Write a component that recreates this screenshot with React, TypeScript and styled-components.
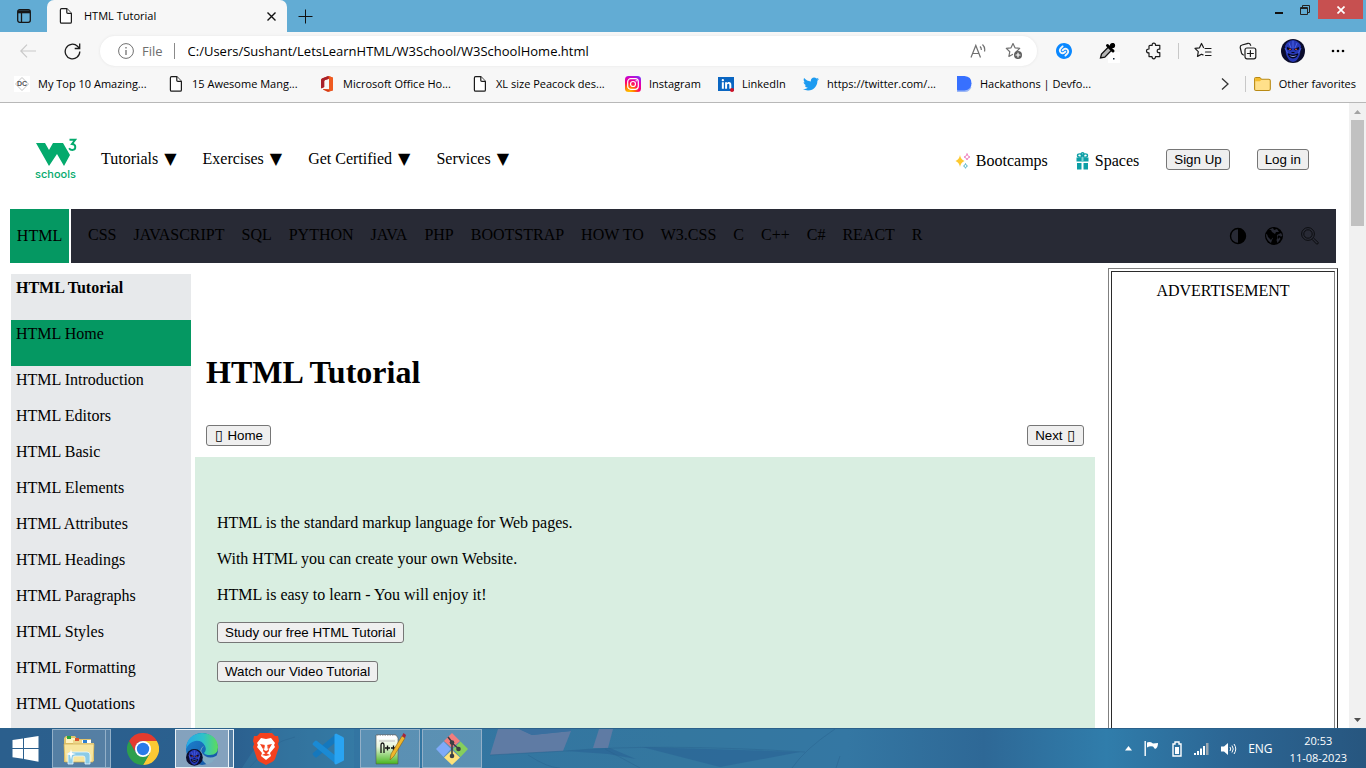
import React from 'react';
import styled, { createGlobalStyle } from 'styled-components';
import { FaTwitter, FaLinkedinIn } from 'react-icons/fa';
import { SiShazam } from 'react-icons/si';

const uiFont = `"Open Sans", "Noto Sans", sans-serif`;
const serif = `"Liberation Serif", "Times New Roman", serif`;
const green = '#059862';

const GlobalStyle = createGlobalStyle`
  * { box-sizing: border-box; }
  body { margin: 0; background: #fff; color: #000; font: 16px/18px ${serif}; }
  a { color: inherit; text-decoration: none; }
  svg { display: block; flex: none; }
  ul { list-style: none; margin: 0; padding: 0; }
`;

const Shell = styled.div`
  display: flex;
  flex-direction: column;
  height: 100vh;
  overflow: hidden;
`;

/* ---------- browser chrome ---------- */

const TitleBar = styled.header`
  display: flex;
  flex: none;
  height: 32px;
  background: #62acd4;
  font: 11px/16px ${uiFont};
`;
const IconButton = styled.button<{ $w?: number }>`
  display: flex;
  align-items: center;
  justify-content: center;
  flex: none;
  width: ${p => p.$w ?? 24}px;
  height: 24px;
  padding: 0;
  border: 0;
  background: none;
  color: #1b1b1b;
`;
const TabActions = styled(IconButton)`
  width: 47px;
  height: 32px;
`;
const Tab = styled.div`
  display: flex;
  align-items: center;
  width: 240px;
  padding: 0 4px 0 11px;
  border-radius: 7px 7px 0 0;
  background: #f7f7f7;
`;
const TabTitle = styled.span`
  flex: 1;
  margin-left: 10px;
`;
const NewTab = styled(IconButton)`
  width: 36px;
  height: 32px;
`;
const WindowButtons = styled.div`
  display: flex;
  margin-left: auto;
  margin-right: 3px;
`;
const WindowButton = styled.button<{ $close?: boolean }>`
  display: flex;
  align-items: center;
  justify-content: center;
  width: ${p => (p.$close ? 45 : 26)}px;
  height: 19px;
  padding: 0;
  border: 0;
  background: ${p => (p.$close ? '#c75050' : 'none')};
`;

const Toolbar = styled.div`
  display: flex;
  align-items: center;
  flex: none;
  height: 38px;
  padding: 0 16px;
  background: #f7f7f7;
`;
const HistoryActions = styled.div`
  display: flex;
  gap: 20px;
`;
const AddressBar = styled.form`
  display: flex;
  align-items: center;
  flex: 1;
  height: 30px;
  margin: 0 15px 0 16px;
  padding: 0 11px 0 18px;
  border-radius: 15px;
  background: #fff;
  box-shadow: 0 0 3px #e4e4e4;
  font: 13px/18px ${uiFont};
`;
const Scheme = styled.span`
  margin-left: 8px;
  padding-right: 11px;
  border-right: 1px solid #8a8a8a;
  color: #6e6e6e;
  line-height: 16px;
`;
const AddressInput = styled.input`
  flex: 1;
  min-width: 0;
  padding: 0 0 0 13px;
  border: 0;
  outline: 0;
  background: none;
  color: #000;
  font: inherit;
`;
const AddressActions = styled.div`
  display: flex;
  gap: 12px;
`;
const Separator = styled.span`
  width: 1px;
  height: 16px;
  background: #c8c8c8;
`;
const ToolbarActions = styled.div`
  display: flex;
  align-items: center;
  gap: 21px;
  ${Separator} { margin: 0 -9px; }
`;

const Bookmarks = styled.nav`
  display: flex;
  align-items: center;
  flex: none;
  height: 33px;
  padding: 0 10px 4px 14px;
  border-bottom: 1px solid #b8b8b8;
  background: #f7f7f7;
  font: 11px/16px ${uiFont};
`;
const Bookmark = styled.a<{ $w?: number }>`
  display: flex;
  align-items: center;
  gap: 8px;
  flex: none;
  width: ${p => (p.$w ? `${p.$w}px` : 'auto')};
  white-space: nowrap;
`;
const BookmarkEnd = styled.div`
  display: flex;
  align-items: center;
  gap: 8px;
  margin-left: auto;
`;

/* ---------- web page ---------- */

const Viewport = styled.div`
  display: flex;
  flex: 1;
  min-height: 0;
`;
const Page = styled.div`
  flex: 1;
  min-width: 0;
  overflow: hidden;
`;
const Scrollbar = styled.div`
  display: flex;
  flex-direction: column;
  align-items: center;
  justify-content: space-between;
  width: 17px;
  padding: 7px 0 6px;
  background: #f1f1f1;
`;
const Thumb = styled.div`
  width: 13px;
  height: 106px;
  margin: 6px 0 auto;
  background: #c1c1c1;
`;
const SiteHeader = styled.header`
  display: flex;
  align-items: center;
  height: 106px;
  padding: 6px 40px 0 35px;
`;
const SiteMenu = styled.nav`
  display: flex;
  gap: 26px;
  margin-left: 24px;
  a { display: flex; gap: 6px; }
`;
const Caret = styled.span`
  font-family: "DejaVu Sans", sans-serif;
`;
const SiteActions = styled.div`
  display: flex;
  align-items: center;
  gap: 27px;
  margin-left: auto;
`;
const IconLink = styled.a`
  display: flex;
  align-items: center;
  gap: 5px;
  padding-top: 4px;
`;
const PlainButton = styled.button`
  height: 21px;
  padding: 0 7px;
  border: 1px solid #767676;
  border-radius: 3px;
  background: #efefef;
  color: #000;
  font-family: "Liberation Sans", Arial, sans-serif;
`;
const Box = styled.span`
  padding: 0 1px;
  font: 14px/14px "DejaVu Sans", sans-serif;
`;

const TopicBar = styled.nav`
  display: flex;
  gap: 2px;
  height: 54px;
  margin: 0 13px 0 10px;
`;
const CurrentTopic = styled.a`
  display: flex;
  align-items: center;
  justify-content: center;
  width: 59px;
  background: ${green};
`;
const Topics = styled.div`
  display: flex;
  align-items: center;
  flex: 1;
  gap: 17px;
  padding: 0 17px;
  background: #282a35;
  a { padding-bottom: 2px; }
`;
const TopicIcons = styled.div`
  display: flex;
  align-items: center;
  gap: 18px;
  margin-left: auto;
`;

const Columns = styled.div`
  display: flex;
  align-items: flex-start;
  padding: 5px 11px 0;
`;
const Sidebar = styled.ul`
  flex: none;
  width: 180px;
  margin-top: 6px;
  padding-bottom: 36px;
  background: #e7e9eb;
`;
const SideItem = styled.li<{ $tall?: boolean; $active?: boolean; $bold?: boolean }>`
  height: ${p => (p.$tall ? 46 : 36)}px;
  padding: 5px;
  background: ${p => (p.$active ? green : 'transparent')};
  font-weight: ${p => (p.$bold ? 700 : 400)};
`;
const Main = styled.main`
  flex: 1;
  min-width: 0;
  margin: 0 13px 0 4px;
`;
const Title = styled.h1`
  margin: 0;
  padding: 86px 11px 34px;
  font-size: 32px;
  line-height: 37px;
`;
const PagerRow = styled.div`
  display: flex;
  justify-content: space-between;
  padding: 0 11px 11px;
`;
const Intro = styled.section`
  display: flex;
  flex-direction: column;
  align-items: flex-start;
  gap: 18px;
  padding: 57px 22px 72px;
  background: #d9eee1;
  p { margin: 0; }
`;
const AdFrame = styled.aside`
  flex: none;
  width: 230px;
  padding: 2px;
  border: 1px solid;
  border-color: #808080 #2b2b2b #2b2b2b #808080;
`;
const AdCell = styled.div`
  height: 600px;
  padding-top: 10px;
  border: 1px solid;
  border-color: #2b2b2b #808080 #808080 #2b2b2b;
  text-align: center;
`;

/* ---------- desktop taskbar ---------- */

const TaskbarRoot = styled.footer`
  position: relative;
  display: flex;
  flex: none;
  height: 40px;
  background: linear-gradient(90deg, #2b5f8d 0%, #2b608f 17%, #3375a2 26%, #34779f 50%, #3477a3 62%, #2e6896 72%, #307dab 81%, #2c6694 90%, #27567f 100%);
  border-top: 1px solid #2b618b;
  color: #fff;
  font: 12px/16px ${uiFont};
`;
const Wallpaper = styled.svg`
  position: absolute;
  left: 0;
  top: 0;
`;
const Apps = styled.div`
  position: relative;
  display: flex;
  gap: 2px;
`;
const AppButton = styled.button<{ $w?: number; $open?: boolean; $active?: boolean }>`
  display: flex;
  align-items: center;
  justify-content: center;
  width: ${p => p.$w ?? 60}px;
  height: 39px;
  padding: 0;
  border: 1px solid ${p => (p.$active ? '#e9f1f6' : p.$open ? '#93b0c8' : 'transparent')};
  background: ${p => (p.$active ? 'rgba(255,255,255,.42)' : p.$open ? 'rgba(255,255,255,.2)' : 'none')};
`;
const Stack = styled.div<{ $active?: boolean }>`
  display: flex;
  &::after {
    content: '';
    width: 4px;
    border: 1px solid ${p => (p.$active ? '#e9f1f6' : '#93b0c8')};
    border-left: 0;
    background: rgba(255, 255, 255, 0.2);
  }
`;
const Tray = styled.div`
  position: relative;
  display: flex;
  align-items: center;
  gap: 11px;
  margin-left: auto;
  padding-right: 19px;
`;
const Clock = styled.time`
  display: flex;
  flex-direction: column;
  align-items: center;
  margin-left: 6px;
  font-size: 11px;
  line-height: 17px;
`;

/* ---------- icons ---------- */

const PageIcon = () => (
  <svg width="16" height="16" viewBox="0 0 16 16" fill="#fff" stroke="#1b1b1b" strokeWidth="1.2" strokeLinejoin="round">
    <path d="M3.6.7h5.2l4.6 4.6v8.6q0 1.3-1.3 1.3H3.6q-1.2 0-1.2-1.3V2q0-1.3 1.2-1.3z" />
    <path d="M8.8.8v3.4q0 1.1 1.1 1.1h3.4" />
  </svg>
);
const DcIcon = () => (
  <svg width="16" height="16" viewBox="0 0 16 16">
    <path fill="#fff" d="M0 0h16v16H0z" />
    <path d="M8 1.500l6.500 6.500L8 14.500 1.500 8z" fill="none" stroke="#c4c4c4" />
    <text x="8" y="10" textAnchor="middle" fontFamily="Liberation Sans" fontSize="7" fontWeight="700" fill="#555">DC</text>
  </svg>
);
const OfficeIcon = () => (
  <svg width="16" height="16" viewBox="0 0 16 16">
    <path d="M9.4 0 3.5 2.2Q2 2.8 2 4.4v7.2q0 1 .8.7l2.4-1.2V5.2q0-1 1-1.3l4-1.1v10.5L4.3 13q-.8.3 0 .8L9 16l5-1.7V1.7z" fill="#d83b12" />
    <path d="M9.4 0 3.5 2.2Q2 2.8 2 4.4v7.2q0 1 .8.7l2.4-1.2V5.2q0-1 1-1.3l3.2-.9z" fill="#a8202b" />
    <path d="M10.2 0 14 1.7v12.6L10.2 15.6z" fill="#ef5b20" />
  </svg>
);
const InstagramIcon = () => (
  <svg width="16" height="16" viewBox="0 0 16 16">
    <defs>
      <radialGradient id="ig" cx=".25" cy="1.05" r="1.2">
        <stop offset="0" stopColor="#ffd600" /><stop offset=".3" stopColor="#ff7a00" />
        <stop offset=".55" stopColor="#ff0169" /><stop offset=".8" stopColor="#d300c5" />
        <stop offset="1" stopColor="#7638fa" />
      </radialGradient>
    </defs>
    <rect width="16" height="16" rx="3.5" fill="url(#ig)" />
    <g fill="none" stroke="#fff" strokeWidth="1.2">
      <rect x="2.7" y="2.7" width="10.6" height="10.6" rx="3" /><circle cx="8" cy="8" r="2.5" />
    </g>
    <circle cx="11.2" cy="4.8" r=".7" fill="#fff" />
  </svg>
);
const LinkedInTile = styled.span`
  display: flex;
  align-items: center;
  justify-content: center;
  position: relative;
  width: 16px;
  height: 14px;
  background: #0a66c2;
  color: #fff;
  &::after {
    content: '';
    position: absolute;
    right: 0;
    bottom: -1px;
    width: 4px;
    height: 4px;
    border-radius: 50%;
    background: #d11124;
  }
`;
const DevfolioIcon = () => (
  <svg width="16" height="16" viewBox="0 0 16 16">
    <path d="M1 13.5V16h8q4.500 0 6.500-5z" fill="#9db8f5" />
    <path d="M1 0h7.500q7 .5 7 7.200 0 6.800-7 7.200H2q-1 0-1-1z" fill="#3770ff" />
  </svg>
);
const FolderIcon = () => (
  <svg width="17" height="16" viewBox="0 0 17 16">
    <path d="M.6 3q0-1.500 1.500-1.500h3.500l1.800 1.700h7.400q1.500 0 1.500 1.500v8.400q0 1.400-1.500 1.400H2.100Q.6 14.500.6 13.100z" fill="#ffe08a" stroke="#b98a14" strokeWidth="1.100" />
    <path d="M1.200 5.200h4.600l1.700-1.500-1.700-1.600H2.100q-.9 0-.9.9z" fill="#f3bb2c" />
  </svg>
);
const Face = () => (
  <>
    <circle cx="12" cy="12" r="12" fill="#0b0c2c" />
    <path d="M4 7q2-5 8-6 6 1 8 6l-1 8q-2 7-7 8-5-1-7-8z" fill="#2637b4" />
    <path d="M8 4l2 5M16 4l-2 5M12 2v7M4 9l3 6M20 9l-3 6" stroke="#4b63e4" />
    <path d="M6 8l5 2-1 1.500-4-1zM18 8l-5 2 1 1.500 4-1z" fill="#05051b" />
    <path d="M8 10.300h2M14 10.300h2" stroke="#e0562f" />
    <path d="M10.500 13.500h3" stroke="#070823" />
    <path d="M6.500 14q5.500 3.500 11 0-1 5-5.500 5.500-4.500-.5-5.500-5.500z" fill="#05051b" />
    <path d="M8 16q4 2 8 0-1.500 2-4 2t-4-2z" fill="#8ea2f3" />
  </>
);
const Profile = () => (
  <svg width="24" height="24" viewBox="0 0 24 24"><Face /></svg>
);
const ToolSvg = styled.svg.attrs({ width: 18, height: 18, viewBox: '0 0 18 18' })`
  fill: none;
  stroke: #1b1b1b;
  stroke-width: 1.2;
  stroke-linecap: round;
  stroke-linejoin: round;
`;
const starPath = 'M8 1.500l2 4.300 4.700.6-3.400 3.300M8 1.500 6 5.800l-4.700.6 3.500 3.300-.9 4.700L7.500 12.400';

const W3Logo = () => (
  <svg width="42" height="42" viewBox="0 0 42 42" fill="#04aa6d">
    <path d="M1 5h9l4 7 4-7h10l7 12-6 11-7-12-8 12z" />
    <path d="M34.500 1.800h5.700L37 6q3.300.2 3.300 3.100 0 2.900-3 2.900-2.100 0-3.200-1.800" fill="none" stroke="#04aa6d" strokeWidth="1.900" />
    <text x="0" y="40" fontFamily="Inter, sans-serif" fontSize="11" fontWeight="500">schools</text>
  </svg>
);

const Sparkles = () => (
  <svg width="16" height="16" viewBox="0 0 16 16">
    <path d="M5 2q.7 4.500 4.500 6Q5.700 9.500 5 14 4.300 9.500.5 8 4.300 6.500 5 2z" fill="#fdc92f" />
    <path d="M12 .5q.3 3 3 3.500-2.700.5-3 3-.3-2.500-3-3 2.700-.5 3-3z" fill="#fff" stroke="#ef84c0" />
    <path d="M10.500 10.500q.3 2 2 2.500-1.700.5-2 2.300-.3-1.800-2-2.300 1.700-.5 2-2.500z" fill="#fff" stroke="#5fb9cc" />
  </svg>
);
const Gift = () => (
  <svg width="15" height="18" viewBox="0 0 15 18" fill="#0c9fa6">
    <path d="M1.500 5.500h12v4h-12zM2 11h4.500v6.500H2zM8.500 11H13v6.500H8.500z" />
    <path d="M6.500 5.500h2v4h-2z" fill="#7fd3d5" />
    <g fill="none" stroke="#0c9fa6" strokeWidth="1.400"><ellipse cx="4.800" cy="3.500" rx="2.300" ry="1.600" /><ellipse cx="10.200" cy="3.500" rx="2.300" ry="1.600" /><circle cx="7.500" cy="2.200" r="1.500" /></g>
  </svg>
);

const Wall = () => (
  <Wallpaper width="1366" height="39" viewBox="0 0 1366 39" aria-hidden="true">
    <path d="M272 0q-12 10-30 39h112V0z" fill="#3a83a8" opacity=".35" />
    <path d="M498 0h21l13 6 39-4-8 20-73 4z" fill="#5f7ba4" />
    <path d="M519 0h52l0 2-39 4z" fill="#3a6f9f" />
    <path d="M599 0h14l-5 19h-15z" fill="#5f7ba4" />
    <path d="M565 22l45-3 26 11-28-5zM642 18l158 5-80 15z" fill="#2b6595" opacity=".7" />
    <path d="M490 26l75-4q90-8 240 1M528 26q20 13 32 13M605 20l35 19M835 0q-30 20-43 39M840 27l-4 12M130 39q30-20 45-39M250 38q20-25 45-30" fill="none" stroke="#2a638f" opacity=".5" />
  </Wallpaper>
);

const Windows = () => (
  <svg width="27" height="26" viewBox="0 0 27 26" fill="#fff">
    <path d="M.5 4 11 2.500V12H.5zM12 2.300 26.500 0v12H12zM.5 13H11v9.800L.5 21.300zM12 13h14.500v12.800L12 23z" />
  </svg>
);
const Explorer = () => (
  <svg width="32" height="32" viewBox="0 0 32 32">
    <path d="M1 29V5l2-2h9l2 3h14v23z" fill="#e0c46d" />
    <path d="M3 5h9v5H3z" fill="#fff3bf" /><path d="M4 3h4v3H4z" fill="#2aa53b" />
    <path d="M10 7h9l1 3h11v18H10z" fill="#edd68a" /><path d="M12 5h4v3h-4z" fill="#d9542c" /><path d="M19 7h9v3h-9z" fill="#fff" /><path d="M20 7h4v3h-4z" fill="#2d7fd1" />
    <path d="M1 11h30l-1 18H2z" fill="#f7e59f" stroke="#cfae51" strokeWidth=".7" />
    <path d="M5 31V22q0-3 3-3h16q3 0 3 3v9h-5v-6q0-2-2-2h-8q-2 0-2 2v6z" fill="#8ccbe6" stroke="#e8f7ff" strokeWidth=".8" />
    <path d="M8 16l1 4 4 1-4 1-1 5-1-5-4-1 4-1z" fill="#fff" />
  </svg>
);
const Chrome = () => (
  <svg width="32" height="32" viewBox="0 0 32 32">
    <path d="M16 8h13.860A16 16 0 0 1 16 32l6.930-12z" fill="#fcc934" />
    <path d="M9.070 20 2.140 8A16 16 0 0 0 16 32l6.930-12z" fill="#2d9f4c" />
    <path d="M2.140 8A16 16 0 0 1 29.860 8H16a8 8 0 0 0-6.930 12z" fill="#e33b2e" />
    <circle cx="16" cy="16" r="8" fill="#fff" /><circle cx="16" cy="16" r="6.200" fill="#2a7be8" />
  </svg>
);
const Edge = () => (
  <svg width="34" height="34" viewBox="0 0 34 34">
    <defs>
      <linearGradient id="edgeTop"><stop offset="0" stopColor="#27a8e8" /><stop offset=".55" stopColor="#2fc2c8" /><stop offset="1" stopColor="#5edc5a" /></linearGradient>
      <linearGradient id="edgeLow" y2="1"><stop offset="0" stopColor="#1c86d2" /><stop offset="1" stopColor="#164f9f" /></linearGradient>
    </defs>
    <circle cx="17" cy="17" r="16" fill="url(#edgeLow)" />
    <path d="M1 17Q2 2 17 1q15 1 16 14 0 8-8 8-5 0-6-2 3-3 1-7-3-6-10-5-6 1-9 8z" fill="url(#edgeTop)" />
    <path d="M19 14q-6 5 1 10 5 3 11 0 2-1 0 2-5 7-12 7 4 0 0-3-5-6-4-10 1-5 4-6z" fill="#82abc4" />
    <g transform="translate(1 17) scale(.7)"><Face /></g>
  </svg>
);
const BraveIcon = () => (
  <svg width="28" height="32" viewBox="0 0 28 32">
    <path d="M8 0h12l3 3 3 0 1 5-1 3 1 3-4 12q-1 2-3 3l-6 3-6-3q-2-1-3-3L1 14l1-3-1-3 1-5h3z" fill="#f4411e" />
    <path d="M14 6l5-1 4 5-1 2 1 2-5 6 1 3-5 4-5-4 1-3-5-6 1-2-1-2 4-5z" fill="#fff" />
    <path d="M8 11l5 1-2 4zM20 11l-5 1 2 4zM12 13h4l1 5-3 3-3-3zM10 22l4-2 4 2-4 1z" fill="#f4411e" /><path d="M13 12h2l1 5-2 1-2-1z" fill="#fff" />
  </svg>
);
const Code = () => (
  <svg width="32" height="32" viewBox="0 0 32 32">
    <path d="M1 20q-1 1 0 2l2 2q1 1 2 0L24 9V1z" fill="#1578bd" />
    <path d="M1 12q-1-1 0-2l2-2q1-1 2 0l19 15v8z" fill="#1a8ad4" />
    <path d="M24 .5 31 4q1 .5 1 1.500v21q0 1-1 1.500l-7 3.500q-1 0-1.500-1V1.500z" fill="#29a4f2" />
  </svg>
);
const Npp = () => (
  <svg width="32" height="32" viewBox="0 0 32 32">
    <defs><linearGradient id="npp" y2="1" x2="0"><stop offset="0" stopColor="#fff" /><stop offset=".4" stopColor="#e7f5dc" /><stop offset="1" stopColor="#47b51e" /></linearGradient></defs>
    <path d="M2 2h20l2 3v26H2z" fill="url(#npp)" stroke="#555" strokeWidth=".6" />
    <path d="M3 2h19v4H3z" fill="#fff" /><path d="M3 2h20" stroke="#777" strokeDasharray="1.500 1" />
    <path d="M5 8h16" stroke="#bbb" />
    <path d="M7 20v-8q0-2 1.500-2t1.500 2v8M11 15h5M13.500 12.500v5M17 15h5M19.500 12.500v5" fill="none" stroke="#111" strokeWidth="1.300" />
    <path d="M28 3l3 2-11 18-4 4 1-6z" fill="#f0b62b" stroke="#8d5f11" strokeWidth=".6" /><path d="M28 3l1.500-3 2.500 2-1 3z" fill="#a6263a" />
  </svg>
);
const GitIcon = () => (
  <svg width="32" height="32" viewBox="0 0 32 32">
    <path d="M16 0l8 8-8 7-8-7z" fill="#f27d7d" /><path d="M0 16l7.500-7.500L15 16l-7.500 8z" fill="#7faaf8" />
    <path d="M24.500 8.500 32 16l-7.500 8L17 16z" fill="#86cf5c" /><path d="M16 17l8 7.500L16 32l-8-7.500z" fill="#ffe27a" />
    <path d="M12 4l4 5v15M16 10l7 6" stroke="#3b3f45" strokeWidth="1.600" fill="none" /><g fill="#3b3f45"><circle cx="16" cy="9.500" r="2.300" /><circle cx="16" cy="23" r="2.300" /><circle cx="22.500" cy="16" r="2.300" /></g>
  </svg>
);

/* ---------- data ---------- */

const bookmarks: { label: string; icon: React.ReactNode; w: number }[] = [
  { label: 'My Top 10 Amazing...', icon: <DcIcon />, w: 154 },
  { label: '15 Awesome Mang...', icon: <PageIcon />, w: 151 },
  { label: 'Microsoft Office Ho...', icon: <OfficeIcon />, w: 153 },
  { label: 'XL size Peacock des...', icon: <PageIcon />, w: 153 },
  { label: 'Instagram', icon: <InstagramIcon />, w: 93 },
  { label: 'LinkedIn', icon: <LinkedInTile><FaLinkedinIn size={11} /></LinkedInTile>, w: 85 },
  { label: 'https://twitter.com/...', icon: <FaTwitter size={16} color="#1d9bf0" />, w: 153 },
  { label: 'Hackathons | Devfo...', icon: <DevfolioIcon />, w: 140 },
];
const menu = ['Tutorials', 'Exercises', 'Get Certified', 'Services'];
const topics = ['CSS', 'JAVASCRIPT', 'SQL', 'PYTHON', 'JAVA', 'PHP', 'BOOTSTRAP', 'HOW TO', 'W3.CSS', 'C', 'C++', 'C#', 'REACT', 'R'];
const lessons = ['Introduction', 'Editors', 'Basic', 'Elements', 'Attributes', 'Headings', 'Paragraphs', 'Styles', 'Formatting', 'Quotations'];

export default function App() {
  return (
    <Shell>
      <GlobalStyle />
      <TitleBar>
        <TabActions aria-label="Tab actions">
          <svg width="14" height="14" viewBox="0 0 14 14" fill="none" stroke="#161616" strokeWidth="1.300"><rect x=".7" y=".7" width="12.600" height="12.600" rx="2" /><path d="M1 2.800h12" strokeWidth="3" /><path d="M4.500 4v9" /></svg>
        </TabActions>
        <Tab>
          <PageIcon />
          <TabTitle>HTML Tutorial</TabTitle>
          <IconButton aria-label="Close tab">
            <svg width="9" height="9" viewBox="0 0 9 9" stroke="#111" strokeWidth="1.400"><path d="M.5.5l8 8M8.500.5l-8 8" /></svg>
          </IconButton>
        </Tab>
        <NewTab aria-label="New tab">
          <svg width="15" height="15" viewBox="0 0 15 15" stroke="#111"><path d="M7.500 .5v14M.5 7.500h14" strokeWidth="1" /></svg>
        </NewTab>
        <WindowButtons>
          <WindowButton aria-label="Minimize"><svg width="8" height="10" viewBox="0 0 8 10"><path fill="#111" d="M0 7h8v2H0z" /></svg></WindowButton>
          <WindowButton aria-label="Restore"><svg width="10" height="10" viewBox="0 0 10 10" fill="none" stroke="#222"><path d="M.5 2.500h7v7h-7zM.5 3.500h7M2.500 2V.5h7v7H8" /></svg></WindowButton>
          <WindowButton $close aria-label="Close"><svg width="8" height="8" viewBox="0 0 8 8" stroke="#fff" strokeWidth="1.700"><path d="M.5.5l7 7M7.500.5l-7 7" /></svg></WindowButton>
        </WindowButtons>
      </TitleBar>

      <Toolbar>
        <HistoryActions>
          <IconButton aria-label="Back"><svg width="16" height="14" viewBox="0 0 16 14" fill="none" stroke="#c9c9c9" strokeWidth="1.200"><path d="M16 7H.8M7 .6.8 7 7 13.400" /></svg></IconButton>
          <IconButton aria-label="Refresh">
            <svg width="17" height="17" viewBox="0 0 17 17" fill="none" stroke="#1b1b1b" strokeWidth="1.300"><path d="M15.800 8.500a7.300 7.300 0 1 1-2.300-5.300l2 2M15.700.5v5h-5" /></svg>
          </IconButton>
        </HistoryActions>
        <AddressBar onSubmit={e => e.preventDefault()}>
          <svg width="16" height="16" viewBox="0 0 16 16" fill="none" stroke="#707070"><circle cx="8" cy="8" r="7.400" /><path d="M8 7v5M8 4v1.400" strokeWidth="1.300" /></svg>
          <Scheme>File</Scheme>
          <AddressInput aria-label="Address" defaultValue="C:/Users/Sushant/LetsLearnHTML/W3School/W3SchoolHome.html" />
          <AddressActions>
            <IconButton type="button" aria-label="Read aloud"><svg width="16" height="16" viewBox="0 0 16 16" fill="none" stroke="#707070" strokeWidth="1.200"><path d="M1 14.500 5.800 2.500l4.700 12M2.600 10.500h6.500M10 3.500q1.500 1.500 1.300 3.500M12.500 1.500q3 3 2 7" /></svg></IconButton>
            <IconButton type="button" aria-label="Add to favorites"><ToolSvg><path d={starPath} stroke="#707070" /><circle cx="13" cy="13" r="4" fill="#5f5f5f" stroke="none" /><path d="M13 11v4M11 13h4" stroke="#fff" /></ToolSvg></IconButton>
          </AddressActions>
        </AddressBar>
        <ToolbarActions>
          <IconButton aria-label="Shazam"><SiShazam size={16} color="#0a88ff" /></IconButton>
          <IconButton aria-label="Color picker">
            <svg width="22" height="24" viewBox="0 0 22 24"><path fill="#fff" d="M10 13h12v11H10z" /><path d="M2.500 19l1-4 7-7 3.300 3-7 7.200z" fill="#b5b5b5" stroke="#111" strokeWidth="1.300" /><path d="M9.500 6.500 15 12M12 8.500l3-3" stroke="#000" strokeWidth="3" strokeLinecap="round" /><circle cx="14.500" cy="6.500" r="2.600" /><path d="M15 19h1.500v1.500H15z" fill="#123" /></svg>
          </IconButton>
          <IconButton aria-label="Extensions">
            <ToolSvg><path d="M5 3.300h2.200Q7 1.200 8.800 1.200t1.700 2.100h4.300v3.900q-2.600-.4-2.600 1.700t2.600 1.700v4h-4.300q0 2.200-1.700 2.200T7 14.600H4v-3.700Q1.500 10.800 1.500 8.900T4 7V4.300q0-1 1-1z" /></ToolSvg>
          </IconButton>
          <Separator />
          <IconButton aria-label="Favorites"><ToolSvg><path d="M9.500 5.500 7.500 1.500l-2 4.300-4.500.6 3.300 3.300-.8 4.700 4-2.200 1.500.7M11 6.500h6M11.500 10h5.500M11.500 13.500h5.500" /></ToolSvg></IconButton>
          <IconButton aria-label="Collections"><ToolSvg><path d="M4.500 13Q3 12.500 2.500 11L1.200 5.500Q1 3.500 3 3l6-1.700q2-.3 2.700 2" /><rect x="6" y="6" width="10.800" height="10.800" rx="2" /><path d="M11.400 8.500v6M8.400 11.500h6" /></ToolSvg></IconButton>
          <IconButton aria-label="Profile"><Profile /></IconButton>
          <IconButton aria-label="More"><svg width="14" height="4" viewBox="0 0 14 4"><circle cx="2" cy="2" r="1.300" /><circle cx="7" cy="2" r="1.300" /><circle cx="12" cy="2" r="1.300" /></svg></IconButton>
        </ToolbarActions>
      </Toolbar>

      <Bookmarks>
        {bookmarks.map(b => <Bookmark href="#" key={b.label} $w={b.w}>{b.icon}{b.label}</Bookmark>)}
        <BookmarkEnd>
          <IconButton aria-label="More bookmarks"><svg width="8" height="12" viewBox="0 0 8 12" fill="none" stroke="#333" strokeWidth="1.300"><path d="M1 .5 7 6l-6 5.500" /></svg></IconButton>
          <Separator />
          <Bookmark href="#"><FolderIcon />Other favorites</Bookmark>
        </BookmarkEnd>
      </Bookmarks>

      <Viewport>
        <Page>
          <SiteHeader>
            <a href="#" aria-label="W3Schools"><W3Logo /></a>
            <SiteMenu>{menu.map(m => <a href="#" key={m}>{m}<Caret>▼</Caret></a>)}</SiteMenu>
            <SiteActions>
              <IconLink href="#"><Sparkles />Bootcamps</IconLink>
              <IconLink href="#"><Gift />Spaces</IconLink>
              <PlainButton>Sign Up</PlainButton>
              <PlainButton>Log in</PlainButton>
            </SiteActions>
          </SiteHeader>
          <TopicBar>
            <CurrentTopic href="#">HTML</CurrentTopic>
            <Topics>
              {topics.map(t => <a href="#" key={t}>{t}</a>)}
              <TopicIcons>
                <svg width="18" height="18" viewBox="0 0 18 18"><circle cx="9" cy="9" r="7.500" fill="none" stroke="#000" strokeWidth="1.400" /><path d="M9 1.500a7.500 7.500 0 0 1 0 15z" /></svg>
                <svg width="18" height="18" viewBox="0 0 18 18"><circle cx="9" cy="9" r="9" /><path d="M4 2.500 8 1l1 2 3-1 2 3-3 0-1 2-3-2-1-2zM12 8l4-2 1.500 3-3 1 1 2-3 4-1-3 1-2zM1 7l4 2 3 2-1 2-1 3Q1 13 1 7z" fill="#282a35" /><path d="M2 7l4 2 2 1-2 3-3-3zM13 8.500l3 .5-3 3z" /></svg>
                <svg width="18" height="18" viewBox="0 0 18 18" fill="none" stroke="#0c0d10"><circle cx="7" cy="7" r="6.400" /><circle cx="7" cy="7" r="4.200" /><path d="M11 12.300l4.600 4.800q1.400.5 1.700-1.600L12.500 11" /></svg>
              </TopicIcons>
            </Topics>
          </TopicBar>
          <Columns>
            <Sidebar>
              <SideItem $tall $bold>HTML Tutorial</SideItem>
              <SideItem $tall $active><a href="#">HTML Home</a></SideItem>
              {lessons.map(l => <SideItem key={l}><a href="#">HTML {l}</a></SideItem>)}
            </Sidebar>
            <Main>
              <Title>HTML Tutorial</Title>
              <PagerRow>
                <PlainButton><Box>▯</Box> Home</PlainButton>
                <PlainButton>Next <Box>▯</Box></PlainButton>
              </PagerRow>
              <Intro>
                <p>HTML is the standard markup language for Web pages.</p>
                <p>With HTML you can create your own Website.</p>
                <p>HTML is easy to learn - You will enjoy it!</p>
                <PlainButton>Study our free HTML Tutorial</PlainButton>
                <PlainButton>Watch our Video Tutorial</PlainButton>
              </Intro>
            </Main>
            <AdFrame><AdCell>ADVERTISEMENT</AdCell></AdFrame>
          </Columns>
        </Page>
        <Scrollbar>
          <svg width="7" height="4" viewBox="0 0 7 4"><path d="M0 4 3.500 0 7 4z" fill="#a3a3a3" /></svg>
          <Thumb />
          <svg width="7" height="4" viewBox="0 0 7 4"><path d="M0 0h7L3.500 4z" fill="#505050" /></svg>
        </Scrollbar>
      </Viewport>

      <TaskbarRoot>
        <Wall />
        <Apps>
          <AppButton $w={50} aria-label="Start"><Windows /></AppButton>
          <Stack><AppButton $w={54} $open aria-label="File Explorer"><Explorer /></AppButton></Stack>
          <AppButton aria-label="Chrome"><Chrome /></AppButton>
          <Stack $active><AppButton $w={54} $open $active aria-label="Edge"><Edge /></AppButton></Stack>
          <AppButton aria-label="Brave"><BraveIcon /></AppButton>
          <AppButton aria-label="Visual Studio Code"><Code /></AppButton>
          <AppButton $open aria-label="Notepad++"><Npp /></AppButton>
          <AppButton $open aria-label="Git"><GitIcon /></AppButton>
        </Apps>
        <Tray>
          <svg width="7" height="5" viewBox="0 0 7 5" fill="#fff"><path d="M0 4.500 3.500 0 7 4.500z" /></svg>
          <svg width="17" height="16" viewBox="0 0 17 16" fill="#fff"><path d="M1.500 0h1.400v15H1.500zM4 1.500q3-1.200 6 1l5-.5q0 5-3 6l-2-2.500q-3-1-6 1z" /></svg>
          <svg width="12" height="16" viewBox="0 0 12 16"><path d="M4 1h4v2h2v12H2V3h2z" fill="none" stroke="#fff" strokeWidth="1.400" /><path d="M4 6h4v7H4z" fill="#fff" /></svg>
          <svg width="16" height="14" viewBox="0 0 16 14" fill="#fff"><path d="M0 11h2v2H0zM3 9h2v4H3zM6 6.500h2V13H6zM9 4h2v9H9z" /><path d="M12 1h2.500v12H12z" fill="#9aa7b1" /></svg>
          <svg width="16" height="14" viewBox="0 0 16 14" fill="#fff"><path d="M0 4.500h3L7 1v12L3 9.500H0z" /><path d="M9 5q1.500 2 0 4M11 3.500q2.500 3.500 0 7M13 2q3.500 5 0 10" fill="none" stroke="#fff" /></svg>
          <span>ENG</span>
          <Clock><span>20:53</span><span>11-08-2023</span></Clock>
        </Tray>
      </TaskbarRoot>
    </Shell>
  );
}
